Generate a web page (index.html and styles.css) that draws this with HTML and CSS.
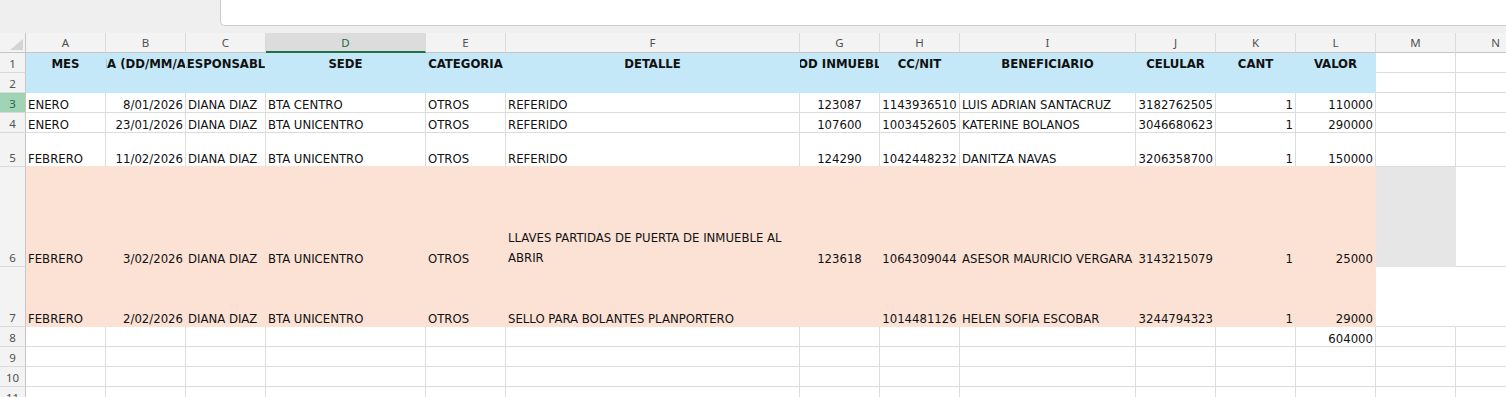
FILE: index.html
```html
<!DOCTYPE html>
<html>
<head>
<meta name="viewport" content="width=device-width, initial-scale=1">
<title>gastos</title>
<link rel="stylesheet" href="styles.css">
</head>
<body>

<div class="topbar">
  <div class="formula"></div>
</div>

<div class="sheet">
  <!-- column letters -->
  <div class="corner"><svg width="13" height="11" viewBox="0 0 13 11"><polygon points="13,0 13,11 0,11" fill="#d4d4d4"/></svg></div>
  <div class="colh">A</div>
  <div class="colh">B</div>
  <div class="colh">C</div>
  <div class="colh sel">D</div>
  <div class="colh">E</div>
  <div class="colh">F</div>
  <div class="colh">G</div>
  <div class="colh">H</div>
  <div class="colh">I</div>
  <div class="colh">J</div>
  <div class="colh">K</div>
  <div class="colh">L</div>
  <div class="colh">M</div>
  <div class="colh">N</div>

  <!-- 1 -->
  <div class="rowh">1</div>
  <div class="cell blue hdr">MES</div>
  <div class="cell blue hdr">FECHA (DD/MM/AAAA)</div>
  <div class="cell blue hdr">RESPONSABLE</div>
  <div class="cell blue hdr">SEDE</div>
  <div class="cell blue hdr">CATEGORIA</div>
  <div class="cell blue hdr">DETALLE</div>
  <div class="cell blue hdr">COD INMUEBLE</div>
  <div class="cell blue hdr">CC/NIT</div>
  <div class="cell blue hdr">BENEFICIARIO</div>
  <div class="cell blue hdr">CELULAR</div>
  <div class="cell blue hdr">CANT</div>
  <div class="cell blue hdr">VALOR</div>
  <div class="cell"></div>
  <div class="cell"></div>

  <!-- 2 -->
  <div class="rowh">2</div>
  <div class="cell blue"></div>
  <div class="cell blue"></div>
  <div class="cell blue"></div>
  <div class="cell blue"></div>
  <div class="cell blue"></div>
  <div class="cell blue"></div>
  <div class="cell blue"></div>
  <div class="cell blue"></div>
  <div class="cell blue"></div>
  <div class="cell blue"></div>
  <div class="cell blue"></div>
  <div class="cell blue"></div>
  <div class="cell"></div>
  <div class="cell"></div>

  <!-- 3 -->
  <div class="rowh sel">3</div>
  <div class="cell">ENERO</div>
  <div class="cell num">8/01/2026</div>
  <div class="cell">DIANA DIAZ</div>
  <div class="cell">BTA CENTRO</div>
  <div class="cell">OTROS</div>
  <div class="cell">REFERIDO</div>
  <div class="cell mid">123087</div>
  <div class="cell mid">1143936510</div>
  <div class="cell">LUIS ADRIAN SANTACRUZ</div>
  <div class="cell num">3182762505</div>
  <div class="cell num">1</div>
  <div class="cell num">110000</div>
  <div class="cell"></div>
  <div class="cell"></div>

  <!-- 4 -->
  <div class="rowh">4</div>
  <div class="cell">ENERO</div>
  <div class="cell num">23/01/2026</div>
  <div class="cell">DIANA DIAZ</div>
  <div class="cell">BTA UNICENTRO</div>
  <div class="cell">OTROS</div>
  <div class="cell">REFERIDO</div>
  <div class="cell mid">107600</div>
  <div class="cell mid">1003452605</div>
  <div class="cell">KATERINE BOLANOS</div>
  <div class="cell num">3046680623</div>
  <div class="cell num">1</div>
  <div class="cell num">290000</div>
  <div class="cell"></div>
  <div class="cell"></div>

  <!-- 5 -->
  <div class="rowh">5</div>
  <div class="cell over-rose">FEBRERO</div>
  <div class="cell num over-rose">11/02/2026</div>
  <div class="cell over-rose">DIANA DIAZ</div>
  <div class="cell over-rose">BTA UNICENTRO</div>
  <div class="cell over-rose">OTROS</div>
  <div class="cell over-rose">REFERIDO</div>
  <div class="cell mid over-rose">124290</div>
  <div class="cell mid over-rose">1042448232</div>
  <div class="cell over-rose">DANITZA NAVAS</div>
  <div class="cell num over-rose">3206358700</div>
  <div class="cell num over-rose">1</div>
  <div class="cell num over-rose">150000</div>
  <div class="cell"></div>
  <div class="cell"></div>

  <!-- 6 -->
  <div class="rowh">6</div>
  <div class="cell rose">FEBRERO</div>
  <div class="cell num rose">3/02/2026</div>
  <div class="cell rose">DIANA DIAZ</div>
  <div class="cell rose">BTA UNICENTRO</div>
  <div class="cell rose">OTROS</div>
  <div class="cell rose wrap"><span class="lines">LLAVES PARTIDAS DE PUERTA DE INMUEBLE AL<br>ABRIR</span></div>
  <div class="cell mid rose">123618</div>
  <div class="cell mid rose">1064309044</div>
  <div class="cell rose">ASESOR MAURICIO VERGARA</div>
  <div class="cell num rose">3143215079</div>
  <div class="cell num rose">1</div>
  <div class="cell num rose">25000</div>
  <div class="cell grey"></div>
  <div class="cell"></div>

  <!-- 7 -->
  <div class="rowh">7</div>
  <div class="cell rose">FEBRERO</div>
  <div class="cell num rose">2/02/2026</div>
  <div class="cell rose">DIANA DIAZ</div>
  <div class="cell rose">BTA UNICENTRO</div>
  <div class="cell rose">OTROS</div>
  <div class="cell rose">SELLO PARA BOLANTES PLANPORTERO</div>
  <div class="cell mid rose"></div>
  <div class="cell mid rose">1014481126</div>
  <div class="cell rose">HELEN SOFIA ESCOBAR</div>
  <div class="cell num rose">3244794323</div>
  <div class="cell num rose">1</div>
  <div class="cell num rose">29000</div>
  <div class="cell no-right"></div>
  <div class="cell"></div>

  <!-- 8 -->
  <div class="rowh">8</div>
  <div class="cell"></div>
  <div class="cell"></div>
  <div class="cell"></div>
  <div class="cell"></div>
  <div class="cell"></div>
  <div class="cell"></div>
  <div class="cell"></div>
  <div class="cell"></div>
  <div class="cell"></div>
  <div class="cell"></div>
  <div class="cell"></div>
  <div class="cell num">604000</div>
  <div class="cell"></div>
  <div class="cell"></div>

  <!-- 9 -->
  <div class="rowh">9</div>
  <div class="cell"></div>
  <div class="cell"></div>
  <div class="cell"></div>
  <div class="cell"></div>
  <div class="cell"></div>
  <div class="cell"></div>
  <div class="cell"></div>
  <div class="cell"></div>
  <div class="cell"></div>
  <div class="cell"></div>
  <div class="cell"></div>
  <div class="cell"></div>
  <div class="cell"></div>
  <div class="cell"></div>

  <!-- 10 -->
  <div class="rowh">10</div>
  <div class="cell"></div>
  <div class="cell"></div>
  <div class="cell"></div>
  <div class="cell"></div>
  <div class="cell"></div>
  <div class="cell"></div>
  <div class="cell"></div>
  <div class="cell"></div>
  <div class="cell"></div>
  <div class="cell"></div>
  <div class="cell"></div>
  <div class="cell"></div>
  <div class="cell"></div>
  <div class="cell"></div>

  <!-- 11 -->
  <div class="rowh">11</div>
  <div class="cell"></div>
  <div class="cell"></div>
  <div class="cell"></div>
  <div class="cell"></div>
  <div class="cell"></div>
  <div class="cell"></div>
  <div class="cell"></div>
  <div class="cell"></div>
  <div class="cell"></div>
  <div class="cell"></div>
  <div class="cell"></div>
  <div class="cell"></div>
  <div class="cell"></div>
  <div class="cell"></div>
</div>

</body>
</html>
```

FILE: styles.css
```css
* {
  box-sizing: border-box;
}

body {
  margin: 0;
  overflow: hidden;
  background-color: white;
  font-family: "DejaVu Sans Condensed", "Liberation Sans", sans-serif;
}

.topbar {
  height: 33px;
  padding-left: 220px;
  background-color: #efefef;
  display: flex;
  align-items: flex-start;
}

.formula {
  flex: 1;
  height: 26px;
  background-color: white;
  border-left: 1px solid #cdcdcd;
  border-bottom: 1px solid #cdcdcd;
  border-bottom-left-radius: 5px;
}

.sheet {
  display: grid;
  grid-template-columns: 26px 80px 80px 80px 160px 80px 294px 80px 80px 176px 80px 80px 80px 80px 80px;
  grid-template-rows: 20px 20px 20px 20px 20px 34px 100px 60px 20px 20px 20px 20px;
}

/* headings */
.corner {
  background-color: #f3f3f3;
  border-right: 1px solid #c6c6c6;
  border-bottom: 1px solid #c6c6c6;
  display: flex;
  align-items: flex-end;
  justify-content: flex-end;
  padding: 0 2px 2px 0;
}

.corner svg {
  display: block;
}

.colh {
  background-color: #f3f3f3;
  border-right: 1px solid #dadada;
  border-bottom: 1px solid #c6c6c6;
  display: flex;
  align-items: center;
  justify-content: center;
  font-family: "Noto Sans", sans-serif;
  font-size: 11.5px;
  color: #505050;
}

.colh.sel {
  background-color: #dcdcdc;
  border-bottom: 2px solid #1e7145;
  color: #1e6a3f;
}

.rowh {
  background-color: #f3f3f3;
  border-right: 1px solid #c6c6c6;
  border-bottom: 1px solid #dadada;
  display: flex;
  align-items: flex-end;
  justify-content: center;
  font-family: "Noto Sans", sans-serif;
  font-size: 11.5px;
  line-height: 17px;
  color: #505050;
}

.rowh.sel {
  background-color: #9fd4b5;
  color: #2d6446;
}

/* cells */
.cell {
  border-right: 1px solid #dcdcdc;
  border-bottom: 1px solid #dcdcdc;
  display: flex;
  align-items: flex-end;
  padding: 0 2px;
  overflow: hidden;
  white-space: nowrap;
  font-size: 13px;
  line-height: 15px;
  color: #111;
}

.num {
  justify-content: flex-end;
}

.mid {
  justify-content: center;
}

.hdr {
  justify-content: center;
  font-weight: bold;
  padding-bottom: 1px;
}

.blue {
  background-color: #c4e8f8;
  border-color: #c4e8f8;
}

.rose {
  background-color: #fbe2d5;
  border-color: #fbe2d5;
}

.over-rose {
  border-bottom-color: #fbe2d5;
}

.grey {
  background-color: #e6e6e6;
  border-color: #e6e6e6;
}

.no-right {
  border-right-color: white;
}

.wrap {
  white-space: normal;
}

.lines {
  display: block;
  line-height: 20px;
  margin-bottom: -2px;
}
```
